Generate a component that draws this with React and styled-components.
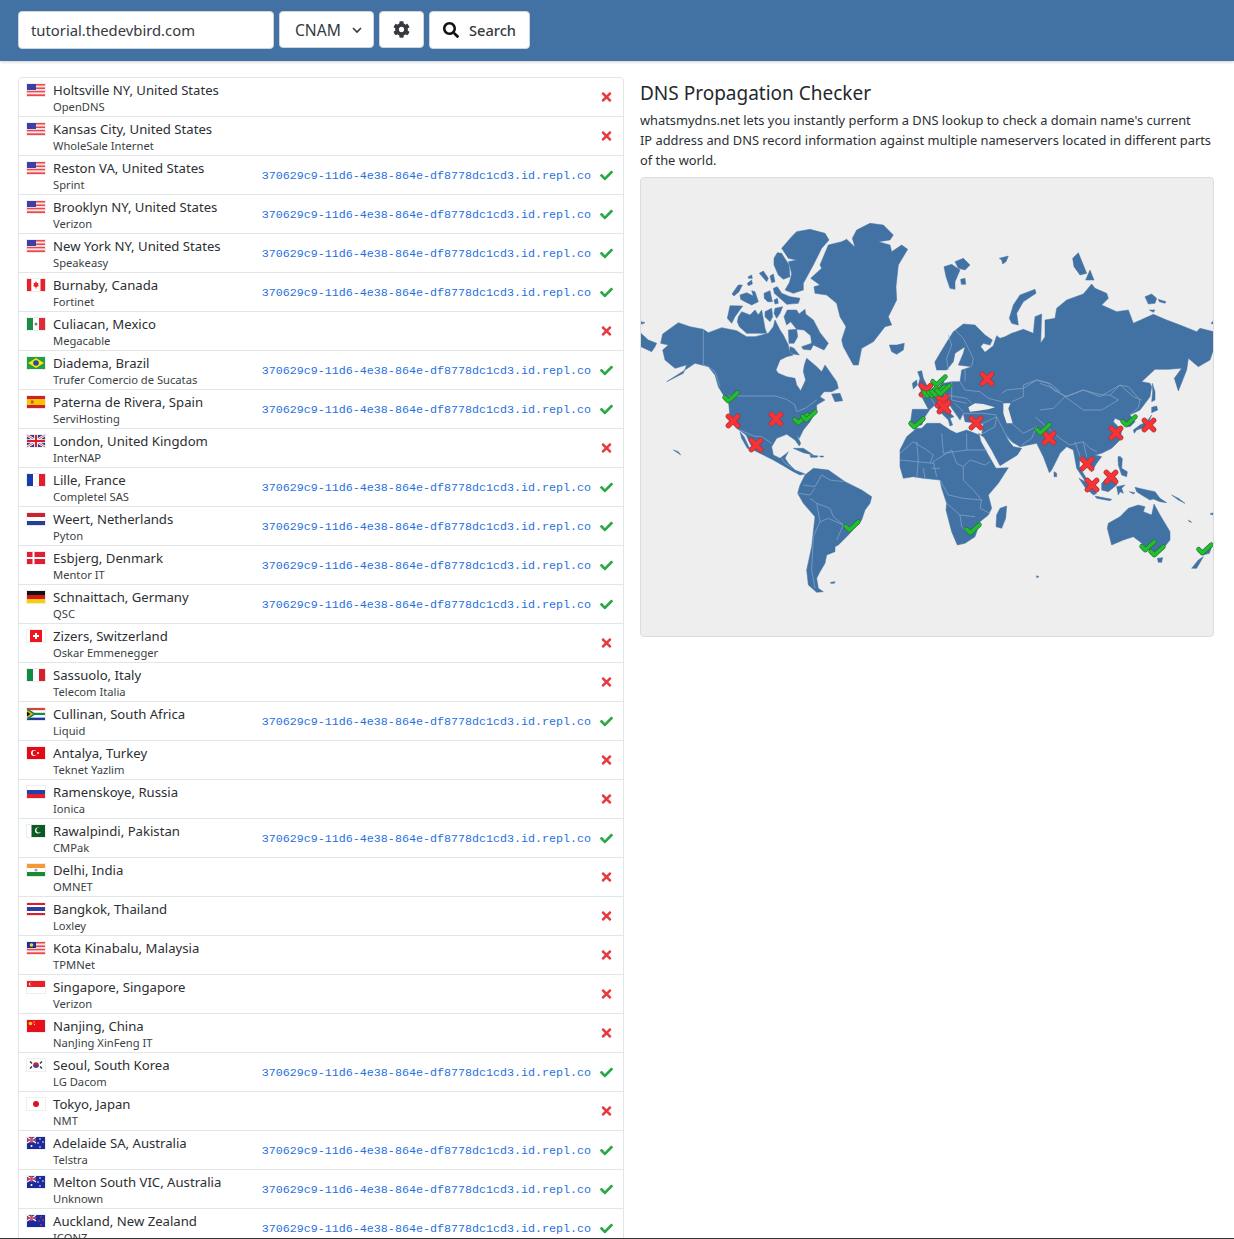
import React from "react";
import styled, { createGlobalStyle } from "styled-components";
import { FaCheck, FaTimes, FaCog, FaSearch } from "react-icons/fa";

const Global = createGlobalStyle`
  html, body { margin: 0; padding: 0; background: #fff; }
  body { font-family: "Noto Sans", "Open Sans", sans-serif; color: #212529; }
`;

const Page = styled.div`
  height: 1239px;
  display: flex;
  flex-direction: column;
  overflow: hidden;
`;
const Header = styled.header`
  height: 61px;
  flex: none;
  box-sizing: border-box;
  padding: 11px 18px 0;
  display: flex;
  align-items: flex-start;
  gap: 5px;
  background: #4272a3;
  box-shadow: 0 1px 3px rgba(0, 0, 0, 0.2);
  position: relative;
`;
const Input = styled.input`
  width: 256px;
  height: 38px;
  box-sizing: border-box;
  padding: 0 12px;
  border: 1px solid #ced4da;
  border-radius: 4px;
  background: #fff;
  color: #343a40;
  font: 400 14.8px "Noto Sans", sans-serif;
  outline: none;
`;
const SelectBox = styled.div`
  width: 95px;
  height: 37px;
  box-sizing: border-box;
  padding: 0 10px 0 15px;
  display: flex;
  align-items: center;
  justify-content: space-between;
  border: 1px solid #ced4da;
  border-radius: 4px;
  background: #fff;
  color: #343a40;
  font-size: 15.6px;
`;
const Button = styled.button`
  height: ${(p) => (p.$tall ? 38 : 37)}px;
  width: ${(p) => p.$w}px;
  box-sizing: border-box;
  padding: 0;
  display: flex;
  align-items: center;
  justify-content: center;
  gap: 10px;
  border: 1px solid #ced4da;
  border-radius: 4px;
  background: #fff;
  color: #343a40;
  font: 500 14.6px "Noto Sans", sans-serif;
`;
const Main = styled.main`
  flex: 1;
  min-height: 0;
  overflow: hidden;
  padding: 16px 20px 0 18px;
  display: flex;
  align-items: flex-start;
  gap: 16px;
`;
const List = styled.div`
  width: 606px;
  flex: none;
  box-sizing: border-box;
  border: 1px solid #e3e6e9;
  border-radius: 4px;
`;
const Row = styled.div`
  height: 39px;
  box-sizing: border-box;
  display: flex;
  align-items: flex-start;
  padding: 0 10px 0 7px;
  border-bottom: 1px solid #e3e6e9;
  overflow: hidden;
  &:last-child { border-bottom: 0; }
`;
const FlagIcon = styled.svg`
  width: 20px;
  height: 14px;
  flex: none;
  margin: 5px 7px 0 0;
  display: block;
`;
const Names = styled.div`
  flex: 1;
  padding-top: 3px;
  min-width: 0;
`;
const City = styled.div`
  font-size: 13.15px;
  line-height: 18px;
  color: #2b2f33;
`;
const Provider = styled.div`
  font-size: 11.2px;
  line-height: 16px;
  color: #3a3f44;
`;
const Address = styled.code`
  font: 400 11.68px "Liberation Mono", monospace;
  color: #1f6fe0;
  line-height: 40px;
  white-space: nowrap;
  margin-right: 9px;
`;
const Status = styled.span`
  width: 13px;
  height: 38px;
  flex: none;
  display: flex;
  align-items: center;
  justify-content: center;
  color: ${(p) => (p.$ok ? "#2aa845" : "#e8383c")};
`;
const Side = styled.section`
  width: 574px;
  flex: none;
`;
const Title = styled.h1`
  margin: 3px 0 4px;
  font-size: 19px;
  line-height: 26px;
  font-weight: 400;
  color: #24292e;
`;
const Intro = styled.p`
  margin: 0 0 7px;
  font-size: 12.85px;
  line-height: 20px;
  color: #2b2f33;
  white-space: nowrap;
`;
const MapPanel = styled.div`
  height: 460px;
  box-sizing: border-box;
  border: 1px solid #dcdcdc;
  border-radius: 4px;
  background: #eeeeee;
  overflow: hidden;
`;
const MapSvg = styled.svg`
  display: block;
  width: 572px;
  height: 458px;
`;
const BottomLine = styled.div`
  height: 1px;
  flex: none;
  background: #333;
`;

const Rect = ({ x = 0, y = 0, w, h, f }) => <rect x={x} y={y} width={w} height={h} fill={f} />;
const HS = ({ cs }) => cs.map((c, i) => <Rect key={i} x={1} y={1 + (i * 12) / cs.length} w={18} h={12 / cs.length + 0.05} f={c} />);
const VS = ({ cs }) => cs.map((c, i) => <Rect key={i} x={1 + (i * 18) / cs.length} y={1} w={18 / cs.length + 0.05} h={12} f={c} />);
const usStripes = Array.from({ length: 7 }, (_, i) => (i % 2 ? "#fbe3e3" : "#e8494e"));

const flags = {
  us: <><HS cs={usStripes} /><Rect x={1} y={1} w={9} h={6} f="#3c3fa8" /></>,
  ca: <><VS cs={["#e8202a", "#fff", "#fff", "#e8202a"]} /><polygon points="10,3 11,5 12.5,5 12,7 13,8 10.5,9 10.5,10.5 9.5,10.5 9.5,9 7,8 8,7 7.5,5 9,5" fill="#e8202a" /></>,
  mx: <><VS cs={["#1e8a4a", "#fff", "#e02b35"]} /><circle cx="10" cy="7" r="1.5" fill="#8a7a5a" /></>,
  br: <><Rect x={1} y={1} w={18} h={12} f="#229e45" /><polygon points="10,2 18,7 10,12 2,7" fill="#f8e509" /><circle cx="10" cy="7" r="2.8" fill="#2b49a3" /></>,
  es: <><HS cs={["#d0202c", "#fbc400", "#fbc400", "#d0202c"]} /><Rect x={5} y={5.5} w={2.5} h={3} f="#b5562a" /></>,
  gb: <><Rect x={1} y={1} w={18} h={12} f="#2a3f8f" /><path d="M1 1L19 13M19 1L1 13" stroke="#fff" strokeWidth="2.6" /><path d="M1 1L19 13M19 1L1 13" stroke="#e0434d" strokeWidth="0.9" /><path d="M10 1V13M1 7H19" stroke="#fff" strokeWidth="3.6" /><path d="M10 1V13M1 7H19" stroke="#d8202c" strokeWidth="2" /></>,
  fr: <VS cs={["#1a3aa8", "#fff", "#e0202c"]} />,
  nl: <HS cs={["#cf2030", "#fff", "#25409c"]} />,
  dk: <><Rect x={1} y={1} w={18} h={12} f="#e01e36" /><path d="M7.5 1V13M1 7H19" stroke="#fff" strokeWidth="2" /></>,
  de: <HS cs={["#111", "#d8141c", "#ffce00"]} />,
  ch: <><Rect x={4} y={1} w={12} h={12} f="#f0141e" /><path d="M10 4V10M7 7H13" stroke="#fff" strokeWidth="2" /></>,
  it: <VS cs={["#0e8c46", "#fff", "#d8202c"]} />,
  za: <><HS cs={["#e0402f", "#fff", "#148a4a", "#fff", "#1f3a9a"]} /><polygon points="1,1 10,7 1,13" fill="#148a4a" /><polygon points="1,3 7,7 1,11" fill="#ffb81c" /><polygon points="1,4.5 4.5,7 1,9.5" fill="#111" /></>,
  tr: <><Rect x={1} y={1} w={18} h={12} f="#e30a17" /><circle cx="8" cy="7" r="3" fill="#fff" /><circle cx="9" cy="7" r="2.4" fill="#e30a17" /><circle cx="12" cy="7" r="1" fill="#fff" /></>,
  ru: <HS cs={["#fff", "#2240a8", "#e0202c"]} />,
  pk: <><Rect x={1} y={1} w={4.5} h={12} f="#fff" /><Rect x={5.5} y={1} w={13.5} h={12} f="#0b5a22" /><circle cx="12" cy="6.5" r="3" fill="#fff" /><circle cx="13" cy="6" r="2.6" fill="#0b5a22" /></>,
  in: <><HS cs={["#f59a33", "#fff", "#1a8a2e"]} /><circle cx="10" cy="7" r="1.6" fill="#9aa6d6" /></>,
  th: <HS cs={["#d8202c", "#fff", "#2a3f9f", "#2a3f9f", "#fff", "#d8202c"]} />,
  my: <><HS cs={usStripes} /><Rect x={1} y={1} w={9} h={6} f="#1d2f9b" /><circle cx="5.5" cy="4" r="1.8" fill="#f8d51c" /></>,
  sg: <><HS cs={["#e8202a", "#fff"]} /><circle cx="4.5" cy="4" r="1.6" fill="#fff" /><circle cx="5.3" cy="4" r="1.4" fill="#e8202a" /></>,
  cn: <><Rect x={1} y={1} w={18} h={12} f="#e60f1b" /><circle cx="4.5" cy="4.5" r="1.8" fill="#f5d40f" /><circle cx="8" cy="3" r=".7" fill="#f5d40f" /><circle cx="8.5" cy="5.5" r=".7" fill="#f5d40f" /></>,
  kr: <><Rect x={1} y={1} w={18} h={12} f="#fff" /><circle cx="10" cy="7" r="2.8" fill="#d8202c" /><path d="M7.2 7A2.8 2.8 0 0 0 12.8 7Z" fill="#2a4aa8" /><path d="M4 3.5L6 5.5M16 3.5L14 5.5M4 10.5L6 8.5M16 10.5L14 8.5" stroke="#333" strokeWidth="1.4" /></>,
  jp: <><Rect x={1} y={1} w={18} h={12} f="#fff" /><circle cx="10" cy="7" r="3" fill="#e0101e" /></>,
  au: <><Rect x={1} y={1} w={18} h={12} f="#1d2a9c" /><Rect x={1} y={1} w={9} h={6} f="#3a3fa2" /><path d="M1 1L10 7M10 1L1 7" stroke="#fff" strokeWidth="1.1" /><path d="M5.5 1V7M1 4H10" stroke="#e8404a" strokeWidth="1.3" /><circle cx="5.5" cy="10" r="1" fill="#fff" /><circle cx="14" cy="3" r=".8" fill="#fff" /><circle cx="17" cy="6" r=".8" fill="#fff" /><circle cx="12" cy="7" r=".8" fill="#fff" /><circle cx="14" cy="11" r=".8" fill="#fff" /></>,
};
flags.nz = (
  <>
    <Rect x={1} y={1} w={18} h={12} f="#1d2a9c" />
    <Rect x={1} y={1} w={9} h={6} f="#3a3fa2" />
    <path d="M1 1L10 7M10 1L1 7" stroke="#fff" strokeWidth="1.1" />
    <path d="M5.5 1V7M1 4H10" stroke="#e8404a" strokeWidth="1.3" />
    <circle cx="15" cy="3" r=".8" fill="#e8404a" />
    <circle cx="17" cy="6" r=".8" fill="#e8404a" />
    <circle cx="13" cy="7" r=".8" fill="#e8404a" />
    <circle cx="15" cy="11" r=".8" fill="#e8404a" />
  </>
);

const Flag = ({ c }) => (
  <FlagIcon viewBox="0 0 20 14">
    <rect x="0.5" y="0.5" width="19" height="13" fill="#fff" stroke="#eeeeee" />
    {flags[c]}
  </FlagIcon>
);

const ADDR = "370629c9-11d6-4e38-864e-df8778dc1cd3.id.repl.co";
const rows = [
  ["us", "Holtsville NY, United States", "OpenDNS", 0],
  ["us", "Kansas City, United States", "WholeSale Internet", 0],
  ["us", "Reston VA, United States", "Sprint", 1],
  ["us", "Brooklyn NY, United States", "Verizon", 1],
  ["us", "New York NY, United States", "Speakeasy", 1],
  ["ca", "Burnaby, Canada", "Fortinet", 1],
  ["mx", "Culiacan, Mexico", "Megacable", 0],
  ["br", "Diadema, Brazil", "Trufer Comercio de Sucatas", 1],
  ["es", "Paterna de Rivera, Spain", "ServiHosting", 1],
  ["gb", "London, United Kingdom", "InterNAP", 0],
  ["fr", "Lille, France", "Completel SAS", 1],
  ["nl", "Weert, Netherlands", "Pyton", 1],
  ["dk", "Esbjerg, Denmark", "Mentor IT", 1],
  ["de", "Schnaittach, Germany", "QSC", 1],
  ["ch", "Zizers, Switzerland", "Oskar Emmenegger", 0],
  ["it", "Sassuolo, Italy", "Telecom Italia", 0],
  ["za", "Cullinan, South Africa", "Liquid", 1],
  ["tr", "Antalya, Turkey", "Teknet Yazlim", 0],
  ["ru", "Ramenskoye, Russia", "Ionica", 0],
  ["pk", "Rawalpindi, Pakistan", "CMPak", 1],
  ["in", "Delhi, India", "OMNET", 0],
  ["th", "Bangkok, Thailand", "Loxley", 0],
  ["my", "Kota Kinabalu, Malaysia", "TPMNet", 0],
  ["sg", "Singapore, Singapore", "Verizon", 0],
  ["cn", "Nanjing, China", "NanJing XinFeng IT", 0],
  ["kr", "Seoul, South Korea", "LG Dacom", 1],
  ["jp", "Tokyo, Japan", "NMT", 0],
  ["au", "Adelaide SA, Australia", "Telstra", 1],
  ["au", "Melton South VIC, Australia", "Unknown", 1],
  ["nz", "Auckland, New Zealand", "ICONZ", 1],
];

const sh = (dx, dy, s) =>
  s.trim().split(/\s+/).map((p) => {
    const [x, y] = p.split(",").map(Number);
    return `${x + dx},${y + dy}`;
  }).join(" ");

const Z2 = [0, 0], Z3 = [840, 0], Z4 = [0, 690], Z5 = [840, 690], Z8 = [720, 450], Z9 = [0, 420], Z10 = [1200, 450];

const land = [
  [Z2, "690,160 730,165 760,195 750,210 715,215 750,225 755,245 785,225 803,238 775,285 768,350 770,390 745,440 755,465 735,470 700,515 665,535 655,585 640,585 610,530 605,510 618,470 600,440 590,400 560,375 525,370 522,350 540,345 512,325 545,295 540,285 565,225 605,215 620,208 645,232 637,205 650,180"],
  [Z2, "470,185 510,178 555,190 567,210 545,235 520,285 490,340 490,360 460,370 435,360 448,338 455,312 450,290 445,275 470,270 445,265 425,235 455,200"],
  [Z2, "402,265 412,248 425,250 447,285 450,320 430,328 415,315 402,285"],
  [Z2, "358,310 370,303 385,325 380,335"],
  [Z2, "390,318 400,312 405,335 395,338"],
  [Z2, "325,320 335,315 337,325 325,325"],
  [Z2, "322,340 335,330 337,342 325,347"],
  [Z2, "276,372 295,345 307,345 297,365 282,378"],
  [Z2, "300,375 320,368 340,378 335,362 345,365 355,395 335,405 315,395 302,388"],
  [Z2, "372,370 390,362 397,395 383,395 373,385"],
  [Z2, "400,355 412,350 425,370 450,380 480,385 475,400 440,403 420,385 403,370"],
  [Z2, "402,390 412,385 415,400 405,402"],
  [Z2, "262,445 270,407 308,408 285,440 275,460"],
  [Z2, "295,440 305,425 330,435 345,420 355,435 365,420 375,475 380,490 345,490 320,490 298,470 292,455"],
  [Z2, "375,425 395,415 398,440 390,455 375,440"],
  [Z2, "405,415 428,410 420,430 410,445 402,430"],
  [Z2, "432,440 442,420 470,420 477,432 495,418 497,432 520,450 540,488 565,520 552,540 520,525 512,540 490,538 485,530 515,520 512,497 492,480 470,478 452,455 440,465"],
  [Z2, "445,480 470,478 473,500 462,520 447,520"],
  [Z2, "450,530 462,535 478,555 460,552 448,545"],
  [Z2, "68,492 115,458 150,470 190,478 205,488 245,473 290,482 320,500 345,500 385,490 400,470 405,450 420,480 430,495 445,525 448,545 460,555 440,560 420,570 408,600 415,610 440,620 465,625 470,645 482,662 497,630 490,605 493,585 500,565 530,590 545,605 555,585 590,635 595,655 575,665 552,665 540,680 555,690 530,705 530,720 510,755 490,780 478,805 470,795 482,820 478,828 465,810 440,793 410,805 395,830 400,855 420,865 440,850 445,845 435,865 445,880 465,900 495,912 480,915 460,905 435,890 400,870 370,855 340,840 318,795 305,785 290,775 270,750 268,720 265,690 250,675 235,650 225,615 205,590 165,580 135,600 80,635 130,610 140,585 105,595 75,570 68,540 85,525 62,520"],
  [Z2, "300,785 312,800 330,838 322,835 305,805"],
  [Z2, "3,490 25,510 50,520 45,530 35,545 3,530"],
  [Z2, "3,455 15,458 5,463"],
  [Z2, "575,672 600,670 608,692 585,695"],
  [Z2, "748,525 770,525 793,520 790,540 770,553 755,545"],
  [Z3, "72,290 95,283 120,300 105,335 105,358 90,355 78,320"],
  [Z3, "105,275 130,265 150,285 135,300 115,295"],
  [Z3, "122,328 135,325 137,343 124,343"],
  [Z3, "238,265 265,258 258,275 248,282 245,270"],
  [Z3, "268,445 280,405 300,375 345,358 348,370 310,395 290,430 295,465 275,460"],
  [Z3, "458,265 475,248 500,310 480,315 462,290"],
  [Z3, "497,330 510,300 522,330"],
  [Z3, "675,380 695,372 710,385 705,400 685,402"],
  [Z3, "715,388 738,395 735,400 718,395"],
  [Z3, "688,420 705,420 700,427"],
  [Z3, "873,460 880,453 880,462"],
  [Z5, "-60,150 -40,110 -10,85 5,85 20,70 60,70 90,90 110,100 140,90 178,105 183,125 205,165 228,205 265,203 235,250 205,285 215,325 205,345 180,365 165,410 135,430 112,435 95,395 78,330 80,310 65,265 60,240 10,235 -20,230 -50,235 -60,200"],
  [Z5, "240,325 260,318 257,355 245,385 228,380 230,345"],
  [Z5, "402,215 410,220 410,230 402,230"],
  [Z5, "350,527 357,530 350,533"],
  [Z10, "335,262 350,258 353,270 335,278"],
  [Z10, "335,285 320,320 290,330 283,340 280,330 300,315 320,305"],
  [Z10, "337,190 345,215 345,240 335,245 338,215"],
  [Z10, "235,410 242,410 240,425 235,425"],
  [Z5, "595,170 607,175 605,205 622,215 620,230 605,225 595,195"],
  [Z5, "477,235 495,245 520,265 530,280 520,285 495,262"],
  [Z5, "525,288 575,298 570,302 530,295"],
  [Z5, "545,250 570,225 590,235 590,255 565,275 545,270"],
  [Z5, "590,260 615,255 605,265 610,280 600,275 595,285"],
  [Z5, "645,262 680,270 705,275 720,295 740,308 720,305 700,297 690,300 665,285 650,275"],
  [Z5, "628,275 645,278 640,282"],
  [Z5, "755,285 775,295 795,310 775,300"],
  [Z5, "805,360 815,367 808,365"],
  [Z5, "870,342 880,338 878,345"],
  [Z5, "565,370 600,350 625,325 655,315 675,320 670,335 695,345 702,312 720,345 750,395 750,420 730,445 700,460 680,445 660,425 640,410 610,420 575,435 562,385"],
  [Z5, "712,475 728,473 725,487 715,487"],
  [Z5, "815,505 835,480 850,470 830,505"],
  [Z5, "848,465 860,440 875,440 868,460"],
  [Z4, "460,145 490,145 520,165 490,158"],
  [Z4, "510,165 535,168 530,172 512,172"],
  [Z4, "540,168 550,168 550,171 540,171"],
  [Z4, "100,150 115,155 122,165 115,160"],
  [Z4, "495,225 520,205 565,210 615,245 665,270 695,290 690,310 675,330 665,360 625,405 595,435 585,440 585,455 560,465 555,490 540,515 530,535 535,565 550,575 530,577 505,555 500,510 515,440 525,350 490,310 473,280 480,255"],
  [Z4, "572,547 585,545 583,550 572,550"],
  [Z8, "113,155 125,152 130,175 145,205 130,225 115,195 120,175"],
  [Z8, "97,190 110,180 112,195 100,207"],
];

const eurasia = [
  sh(840, 0, "45,575 60,550 75,525 100,485 130,462 165,465 195,495 217,510 210,525 190,520 182,530 195,547 220,527 230,497 240,505 255,500 275,490 310,478 340,490 345,440 365,432 362,520 375,500 375,450 405,445 410,415 440,390 490,372 515,342 525,355 560,370 565,385 545,405 590,425 625,420 640,460 700,433 740,450 780,465 830,485 840,475 880,485 880,540 870,570 835,590 805,565 800,600 775,663 763,625 785,595 745,598 705,598 665,635"),
  sh(1200, 450, "330,190 335,200 330,230 300,270 270,285 285,305 270,320 255,318 250,305 225,295 220,305 245,330 240,360 215,385 185,400 165,405"),
  sh(840, 690, "545,170 530,190 515,215 495,195 480,170 478,200 505,245 500,250 470,205 460,150 440,140 420,160 395,210 388,218 370,170 350,130 300,140 275,125 255,105 268,125 280,140 305,145 292,165 240,197 215,150 192,112 175,100"),
  sh(720, 450, "305,345 310,312 255,305 250,280 240,300 205,250 190,260 222,290 210,295 218,315 210,318 205,300 180,275 165,255 150,268 135,290 125,315 90,318 97,268 145,268 125,230 150,230 150,215 175,205 185,190 195,170 190,190 215,185 240,185 245,150 275,140 235,135 250,100 255,80 225,100 220,125 200,150 170,150 165,130"),
].join(" ");

const holes = [
  [Z8, "265,262 285,250 310,252 345,262 325,268 295,272 270,275"],
  [Z8, "370,250 392,250 385,265 398,310 380,310 370,280"],
];

const borders = [
  [Z2, "190,478 190,585 205,590 225,605 240,650"],
  [Z9, "265,258 405,258 440,268 465,285 470,305 495,295 530,270"],
  [Z9, "300,360 340,378 365,380 395,400"],
  [Z4, "425,175 435,190 460,205"],
  [Z4, "490,255 525,260 545,225 570,240 610,245"],
  [Z4, "475,280 510,285 525,265"],
  [Z4, "510,295 530,310 570,325 580,350 610,375 590,420"],
  [Z4, "530,310 540,365 520,410 515,510 525,565"],
  [Z4, "540,365 565,355 610,375"],
  [Z5, "65,100 70,160 140,150 140,100"],
  [Z5, "140,150 200,150"],
  [Z5, "40,185 95,150"],
  [Z5, "130,200 150,180 195,195 210,185"],
  [Z5, "60,240 85,285 130,295 185,300"],
  [Z5, "80,310 120,345 165,350"],
  [Z5, "120,345 125,380 135,390"],
  [Z5, "185,300 180,325 210,340"],
  [Z5, "95,150 110,190 130,200 130,240 160,270 185,300"],
  [Z5, "40,185 50,230"],
  [Z4, "780,160 820,125 860,150 880,165 870,190"],
  [Z4, "780,180 830,185 880,190"],
  [Z4, "830,125 835,180 830,235"],
  [Z4, "850,205 855,235"],
  [Z4, "875,205 900,205"],
  [Z8, "175,205 195,225 205,250"],
  [Z8, "150,230 165,255"],
  [Z8, "215,185 215,240 260,250"],
  [Z8, "240,185 255,210 300,215 325,235"],
  [Z8, "255,145 255,185"],
  [Z8, "195,225 260,235 275,250"],
  [Z8, "225,250 250,275"],
  [Z8, "205,45 215,75 200,115 205,150"],
  [Z8, "225,30 250,55 265,85 280,115 275,140"],
  [Z8, "250,280 310,280 350,285"],
  [Z8, "305,312 350,290 375,340 400,370"],
  [Z8, "350,290 345,320 300,345"],
  [Z8, "395,310 430,340 470,320 455,355 425,375"],
  [Z8, "325,235 365,245 370,250"],
  [Z8, "395,245 430,230 430,195 470,180 510,190 540,215"],
  [Z10, "0,190 40,205 75,230 130,270 185,270 235,240 210,225 240,195 265,200 300,240 295,262 270,285"],
  [Z10, "130,210 185,225 210,225"],
  [Z10, "75,230 130,210"],
  [Z10, "75,230 40,265 0,270"],
  [Z5, "345,50 385,85 420,115 450,135 490,125 510,145 530,155"],
  [Z5, "465,125 480,170"],
  [Z5, "490,125 500,170"],
  [Z3, "245,670 260,660 310,655 350,630 385,640 400,660 440,680 490,660 540,680 600,645 640,680 665,690"],
];

const Check = ({ x, y }) => {
  const d = `M${x - 19} ${y + 1}L${x - 8} ${y + 12}L${x + 19} ${y - 13}`;
  return (
    <g fill="none" strokeLinecap="round" strokeLinejoin="round">
      <path d={d} stroke="#2c6b2f" strokeWidth="14" />
      <path d={d} stroke="#1fc02f" strokeWidth="10.5" />
    </g>
  );
};
const Cross = ({ x, y }) => {
  const d = `M${x - 14} ${y - 14}L${x + 14} ${y + 14}M${x + 14} ${y - 14}L${x - 14} ${y + 14}`;
  return (
    <g fill="none" strokeLinecap="round">
      <path d={d} stroke="#9b3136" strokeWidth="16" />
      <path d={d} stroke="#f63437" strokeWidth="13" />
    </g>
  );
};

const P = (px, py) => ({ x: (px - 640) * 3, y: (py - 170) * 3 });
const crosses = [[733, 421], [776, 419], [756, 445], [926, 390], [942, 401], [944, 407], [987, 379], [976, 423], [1049, 438], [1116, 433], [1149, 425], [1087, 464], [1111, 477], [1092, 485]];
const checks = [[731, 397], [801, 419], [809, 416], [917, 423], [939, 381], [930, 392], [935, 392], [938, 391], [943, 390], [1043, 429], [1129, 421], [973, 529], [1148, 546], [1157, 551], [1205, 549], [852, 526]];

const WorldMap = () => (
  <MapSvg viewBox="3 24 1716 1374">
    <g fill="#4272a4" stroke="#4272a4" strokeWidth="1.5" strokeLinejoin="round">
      <polygon points={eurasia} />
      {land.map(([o, s], i) => (
        <polygon key={i} points={sh(o[0], o[1], s)} />
      ))}
    </g>
    <g fill="#eeeeee">
      {holes.map(([o, s], i) => (
        <polygon key={i} points={sh(o[0], o[1], s)} />
      ))}
    </g>
    <g fill="none" stroke="#86a5c6" strokeWidth="2.2" strokeLinejoin="round">
      {borders.map(([o, s], i) => (
        <polyline key={i} points={sh(o[0], o[1], s)} />
      ))}
    </g>
    {crosses.map(([a, b], i) => (
      <Cross key={i} {...P(a, b)} />
    ))}
    {checks.map(([a, b], i) => (
      <Check key={i} {...P(a, b)} />
    ))}
  </MapSvg>
);

export default function App() {
  return (
    <Page>
      <Global />
      <Header>
        <Input readOnly value="tutorial.thedevbird.com" />
        <SelectBox>
          CNAM
          <svg width="12" height="12" viewBox="0 0 12 12" fill="none" stroke="#343a40" strokeWidth="1.6">
            <path d="M2 4l4 4 4-4" />
          </svg>
        </SelectBox>
        <Button $w={45}>
          <FaCog size={17} />
        </Button>
        <Button $w={101} $tall>
          <FaSearch size={16} color="#111" />
          Search
        </Button>
      </Header>
      <Main>
        <List>
          {rows.map(([c, city, prov, ok]) => (
            <Row key={city}>
              <Flag c={c} />
              <Names>
                <City>{city}</City>
                <Provider>{prov}</Provider>
              </Names>
              {ok ? <Address>{ADDR}</Address> : null}
              <Status $ok={ok}>{ok ? <FaCheck size={13} /> : <FaTimes size={14} />}</Status>
            </Row>
          ))}
        </List>
        <Side>
          <Title>DNS Propagation Checker</Title>
          <Intro>
            whatsmydns.net lets you instantly perform a DNS lookup to check a domain name's current
            <br />
            IP address and DNS record information against multiple nameservers located in different parts
            <br />
            of the world.
          </Intro>
          <MapPanel>
            <WorldMap />
          </MapPanel>
        </Side>
      </Main>
      <BottomLine />
    </Page>
  );
}
